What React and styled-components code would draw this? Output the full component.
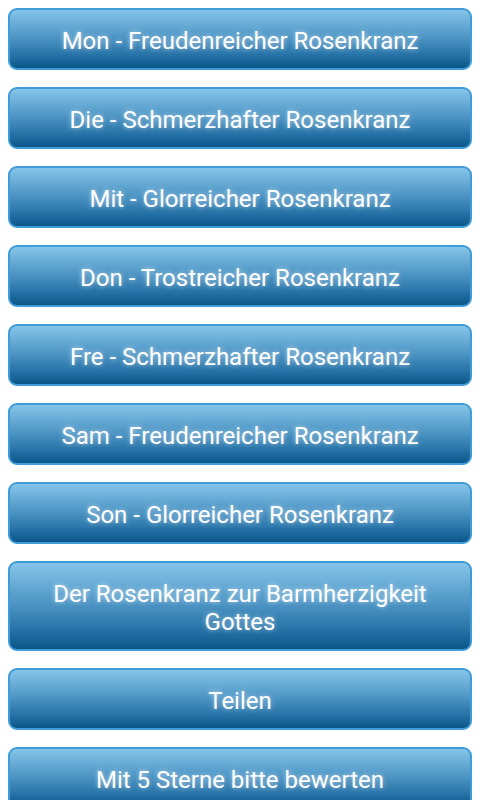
import styled, { createGlobalStyle } from "styled-components";

const GlobalStyle = createGlobalStyle`
  html, body {
    margin: 0;
    padding: 0;
    background: #ffffff;
    font-family: Roboto, "Noto Sans", sans-serif;
  }
`;

const Page = styled.div`
  display: flex;
  flex-direction: column;
  gap: 17px;
  padding: 8px 8px 0 8px;
  height: 800px;
  box-sizing: border-box;
  overflow: hidden;
`;

const MenuButton = styled.button`
  flex-shrink: 0;
  width: 100%;
  padding: 17px 20px 13px;
  box-sizing: border-box;
  border: 2px solid #3f9cd6;
  border-radius: 9px;
  background: linear-gradient(to bottom, #86c5ea 0%, #4f97c6 45%, #2a76aa 75%, #0b5689 100%);
  color: #ffffff;
  font-family: Roboto, "Noto Sans", sans-serif;
  font-size: 24px;
  line-height: 28px;
  text-align: center;
  text-shadow: 0 0 5px rgba(255, 255, 255, 0.6);
  cursor: pointer;
`;

const items = [
  "Mon - Freudenreicher Rosenkranz",
  "Die - Schmerzhafter Rosenkranz",
  "Mit - Glorreicher Rosenkranz",
  "Don - Trostreicher Rosenkranz",
  "Fre - Schmerzhafter Rosenkranz",
  "Sam - Freudenreicher Rosenkranz",
  "Son - Glorreicher Rosenkranz",
  "Der Rosenkranz zur Barmherzigkeit Gottes",
  "Teilen",
  "Mit 5 Sterne bitte bewerten",
];

function App() {
  return (
    <>
      <GlobalStyle />
      <Page>
        {items.map((label) => (
          <MenuButton key={label}>{label}</MenuButton>
        ))}
      </Page>
    </>
  );
}

export default App;
